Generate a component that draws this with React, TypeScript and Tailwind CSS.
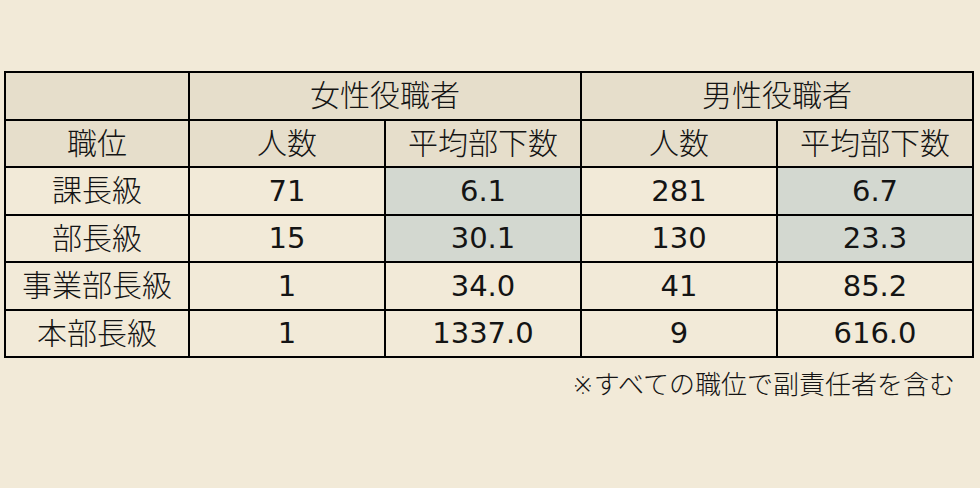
import React from "react";

const font = { fontFamily: '"DejaVu Sans", "Noto Sans CJK JP", sans-serif' };

type Row = { label: string; f: string; fa: string; m: string; ma: string; shade: boolean };

const rows: Row[] = [
  { label: "課長級", f: "71", fa: "6.1", m: "281", ma: "6.7", shade: true },
  { label: "部長級", f: "15", fa: "30.1", m: "130", ma: "23.3", shade: true },
  { label: "事業部長級", f: "1", fa: "34.0", m: "41", ma: "85.2", shade: false },
  { label: "本部長級", f: "1", fa: "1337.0", m: "9", ma: "616.0", shade: false },
];

export default function App() {
  const cell = "border-2 border-black text-center align-middle p-0 leading-none";
  const jp = `${cell} text-[30px] font-light`;
  const num = `${cell} text-[29px]`;
  return (
    <div
      className="w-[980px] h-[488px] bg-[#f2ead8] text-[#141414] pt-[71px] pl-[4px] overflow-hidden"
      style={font}
    >
      <table className="border-collapse table-fixed w-[970px]">
        <colgroup>
          <col className="w-[184px]" />
          <col className="w-[196px]" />
          <col className="w-[196px]" />
          <col className="w-[196px]" />
          <col className="w-[196px]" />
        </colgroup>
        <tbody>
          <tr className="h-[48px] bg-[#e6decb]">
            <td className={jp}></td>
            <td className={jp} colSpan={2}>女性役職者</td>
            <td className={jp} colSpan={2}>男性役職者</td>
          </tr>
          <tr className="h-[47px] bg-[#e6decb]">
            <td className={jp}>職位</td>
            <td className={jp}>人数</td>
            <td className={jp}>平均部下数</td>
            <td className={jp}>人数</td>
            <td className={jp}>平均部下数</td>
          </tr>
          {rows.map((r, i) => (
            <tr key={r.label} className={i % 2 === 0 ? "h-[48px]" : "h-[47px]"}>
              <td className={jp}>{r.label}</td>
              <td className={num}>{r.f}</td>
              <td className={`${num} ${r.shade ? "bg-[#d3d8d0]" : ""}`}>{r.fa}</td>
              <td className={num}>{r.m}</td>
              <td className={`${num} ${r.shade ? "bg-[#d3d8d0]" : ""}`}>{r.ma}</td>
            </tr>
          ))}
        </tbody>
      </table>
      <div className="w-[951px] text-right text-[26px] font-light mt-[14px] leading-none">
        ※すべての職位で副責任者を含む
      </div>
    </div>
  );
}
